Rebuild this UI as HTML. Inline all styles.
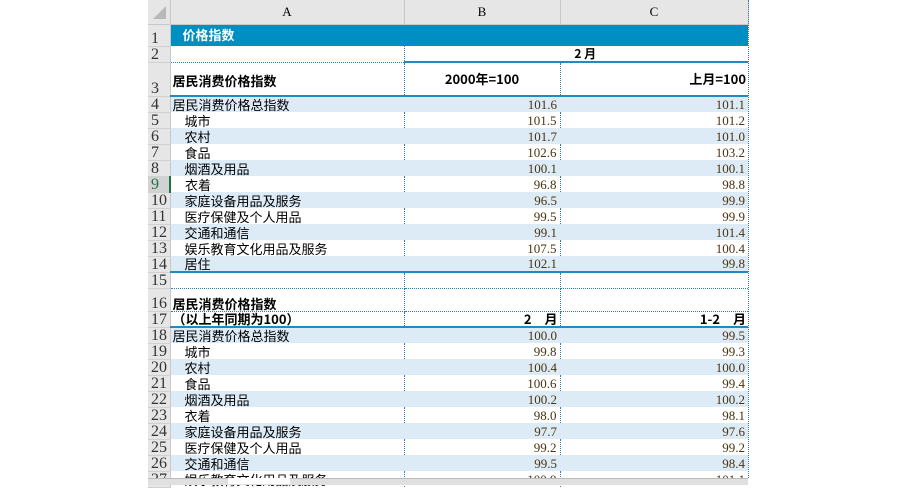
<!DOCTYPE html>
<html><head><meta charset="utf-8"><style>
body{margin:0;width:900px;height:484px;overflow:hidden;background:#fff;font-family:"Liberation Serif","Noto Sans CJK SC",serif;position:relative}
table{position:absolute;left:148px;top:0;border-collapse:collapse;table-layout:fixed}
td{padding:0 2px;font-size:12px;white-space:nowrap;overflow:hidden;vertical-align:bottom;line-height:14px}
td.h{background:#e6e6e6;color:#333;text-align:left;padding-left:3px;border-right:1px solid #c8c8c8;border-bottom:1px solid #d0d0d0;font-size:16px;line-height:15px;font-family:"Liberation Serif",serif}
td.hs{background:#d2d2d2;color:#217346;border-right:2px solid #217346}
tr.ch td{background:#e6e6e6;text-align:center;border-right:1px solid #c8c8c8;border-bottom:1px solid #c8c8c8;vertical-align:middle;font-size:13px}
.cjk{font-family:"Noto Sans CJK SC","WenQuanYi Zen Hei",sans-serif;font-size:13px}
.b{font-weight:bold}
.n{text-align:right;color:#4a3310;font-family:"Liberation Serif",serif;padding-right:3px;font-size:13px}
.da{border-right:1px dotted #2a7fb0}
.bl td.x{background:#ddebf7}
.tb td.x{border-top:2px solid #1f8bc0}
.ttl td.x{background:#008fc2;color:#fff;font-weight:bold;vertical-align:middle}
</style></head><body>
<table>
<colgroup><col style="width:22px"><col style="width:234px"><col style="width:156px"><col style="width:188px"></colgroup>
<tr class="ch" style="height:24px"><td style="background:#e6e6e6"></td><td>A</td><td>B</td><td>C</td></tr>
<tr class="ttl" style="height:22px"><td class="h">1</td><td class="x cjk" colspan="3" style="padding-left:12px;font-size:13px">价格指数</td></tr>
<tr style="height:16px"><td class="h">2</td><td class="x da" style="border-bottom:1px dotted #2a7fb0"></td><td class="x b cjk" colspan="2" style="text-align:center;font-size:12px;padding-left:20px">2 月</td></tr>
<tr class="tb" style="height:34px"><td class="h">3</td><td class="x b cjk da" style="border-top:none;vertical-align:middle;padding-top:4px">居民消费价格指数</td><td class="x b cjk da" style="text-align:center;vertical-align:middle">2000年=100</td><td class="x b cjk" style="text-align:right;vertical-align:middle">上月=100</td></tr>
<tr class="bl tb" style="height:16px"><td class="h">4</td><td class="x cjk">居民消费价格总指数</td><td class="x n">101.6</td><td class="x n">101.1</td></tr>
<tr style="height:16px"><td class="h">5</td><td class="x cjk da" style="padding-left:14px">城市</td><td class="x n da">101.5</td><td class="x n">101.2</td></tr>
<tr class="bl" style="height:16px"><td class="h">6</td><td class="x cjk" style="padding-left:14px">农村</td><td class="x n">101.7</td><td class="x n">101.0</td></tr>
<tr style="height:16px"><td class="h">7</td><td class="x cjk da" style="padding-left:14px">食品</td><td class="x n da">102.6</td><td class="x n">103.2</td></tr>
<tr class="bl" style="height:16px"><td class="h">8</td><td class="x cjk" style="padding-left:14px">烟酒及用品</td><td class="x n">100.1</td><td class="x n">100.1</td></tr>
<tr style="height:16px"><td class="h hs">9</td><td class="x cjk da" style="padding-left:14px">衣着</td><td class="x n da">96.8</td><td class="x n">98.8</td></tr>
<tr class="bl" style="height:16px"><td class="h">10</td><td class="x cjk" style="padding-left:14px">家庭设备用品及服务</td><td class="x n">96.5</td><td class="x n">99.9</td></tr>
<tr style="height:16px"><td class="h">11</td><td class="x cjk da" style="padding-left:14px">医疗保健及个人用品</td><td class="x n da">99.5</td><td class="x n">99.9</td></tr>
<tr class="bl" style="height:16px"><td class="h">12</td><td class="x cjk" style="padding-left:14px">交通和通信</td><td class="x n">99.1</td><td class="x n">101.4</td></tr>
<tr style="height:16px"><td class="h">13</td><td class="x cjk da" style="padding-left:14px">娱乐教育文化用品及服务</td><td class="x n da">107.5</td><td class="x n">100.4</td></tr>
<tr class="bl" style="height:16px"><td class="h">14</td><td class="x cjk" style="padding-left:14px">居住</td><td class="x n">102.1</td><td class="x n">99.8</td></tr>
<tr class="tb" style="height:16px"><td class="h">15</td><td class="x da" style="border-bottom:1px dotted #2a7fb0"></td><td class="x da" style="border-bottom:1px dotted #2a7fb0"></td><td class="x" style="border-bottom:1px dotted #2a7fb0"></td></tr>
<tr style="height:23px"><td class="h">16</td><td class="x b cjk da" style="border-bottom:1px dotted #2a7fb0">居民消费价格指数</td><td class="x da" style="border-bottom:1px dotted #2a7fb0"></td><td class="x" style="border-bottom:1px dotted #2a7fb0"></td></tr>
<tr style="height:16px"><td class="h">17</td><td class="x b cjk da">（以上年同期为100）</td><td class="x b cjk da" style="text-align:right">2　月</td><td class="x b cjk" style="text-align:right">1-2　月</td></tr>
<tr class="bl tb" style="height:16px"><td class="h">18</td><td class="x cjk">居民消费价格总指数</td><td class="x n">100.0</td><td class="x n">99.5</td></tr>
<tr style="height:16px"><td class="h">19</td><td class="x cjk da" style="padding-left:14px">城市</td><td class="x n da">99.8</td><td class="x n">99.3</td></tr>
<tr class="bl" style="height:16px"><td class="h">20</td><td class="x cjk" style="padding-left:14px">农村</td><td class="x n">100.4</td><td class="x n">100.0</td></tr>
<tr style="height:16px"><td class="h">21</td><td class="x cjk da" style="padding-left:14px">食品</td><td class="x n da">100.6</td><td class="x n">99.4</td></tr>
<tr class="bl" style="height:16px"><td class="h">22</td><td class="x cjk" style="padding-left:14px">烟酒及用品</td><td class="x n">100.2</td><td class="x n">100.2</td></tr>
<tr style="height:16px"><td class="h">23</td><td class="x cjk da" style="padding-left:14px">衣着</td><td class="x n da">98.0</td><td class="x n">98.1</td></tr>
<tr class="bl" style="height:16px"><td class="h">24</td><td class="x cjk" style="padding-left:14px">家庭设备用品及服务</td><td class="x n">97.7</td><td class="x n">97.6</td></tr>
<tr style="height:16px"><td class="h">25</td><td class="x cjk da" style="padding-left:14px">医疗保健及个人用品</td><td class="x n da">99.2</td><td class="x n">99.2</td></tr>
<tr class="bl" style="height:16px"><td class="h">26</td><td class="x cjk" style="padding-left:14px">交通和通信</td><td class="x n">99.5</td><td class="x n">98.4</td></tr>
<tr style="height:16px"><td class="h">27</td><td class="x cjk da" style="padding-left:14px">娱乐教育文化用品及服务</td><td class="x n da">100.9</td><td class="x n">101.1</td></tr>
</table>
<div style="position:absolute;left:148px;top:0;width:22px;height:24px;background:#e6e6e6"></div>
<div style="position:absolute;left:153px;top:6px;width:0;height:0;border-left:13px solid transparent;border-bottom:13px solid #b8b8b8"></div>
<div style="position:absolute;left:748px;top:0;width:1px;height:478px;border-left:1px dotted #2a7fb0"></div>
<div style="position:absolute;left:749px;top:0;width:151px;height:24px;background:#fff"></div>
<div style="position:absolute;left:148px;top:478px;width:600px;height:6px;background:#e0e0e0;border-top:1px solid #bbb"></div>
<div style="position:absolute;left:228px;top:478px;width:62px;height:6px;background:#fff"></div>
</body></html>
